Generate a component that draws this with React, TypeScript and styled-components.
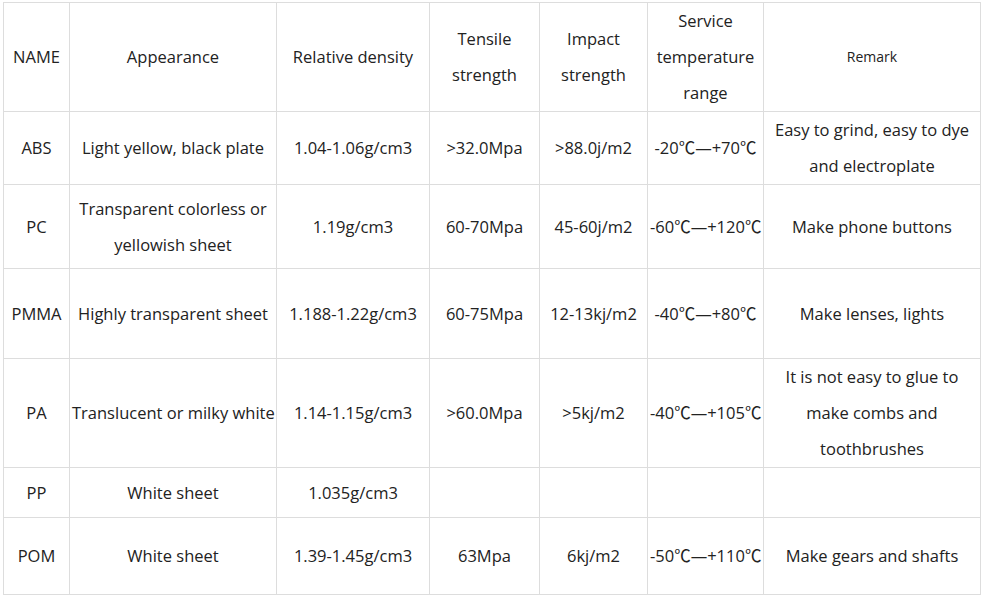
import React from "react";
import styled, { createGlobalStyle } from "styled-components";

const GlobalStyle = createGlobalStyle`
  html, body {
    margin: 0;
    padding: 0;
    background: #ffffff;
  }
`;

type Row = {
  height: number;
  cells: React.ReactNode[];
};

const widths = [66, 207, 153, 110, 108, 116, 217];

const rows: Row[] = [
  {
    height: 72,
    cells: [
      "ABS",
      "Light yellow, black plate",
      "1.04-1.06g/cm3",
      ">32.0Mpa",
      ">88.0j/m2",
      "-20℃—+70℃",
      <>
        Easy to grind, easy to dye
        <br />
        and electroplate
      </>,
    ],
  },
  {
    height: 84,
    cells: [
      "PC",
      <>
        Transparent colorless or
        <br />
        yellowish sheet
      </>,
      "1.19g/cm3",
      "60-70Mpa",
      "45-60j/m2",
      "-60℃—+120℃",
      "Make phone buttons",
    ],
  },
  {
    height: 90,
    cells: [
      "PMMA",
      "Highly transparent sheet",
      "1.188-1.22g/cm3",
      "60-75Mpa",
      "12-13kj/m2",
      "-40℃—+80℃",
      "Make lenses, lights",
    ],
  },
  {
    height: 109,
    cells: [
      "PA",
      "Translucent or milky white",
      "1.14-1.15g/cm3",
      ">60.0Mpa",
      ">5kj/m2",
      "-40℃—+105℃",
      <>
        It is not easy to glue to
        <br />
        make combs and
        <br />
        toothbrushes
      </>,
    ],
  },
  {
    height: 50,
    cells: ["PP", "White sheet", "1.035g/cm3", "", "", "", ""],
  },
  {
    height: 77,
    cells: [
      "POM",
      "White sheet",
      "1.39-1.45g/cm3",
      "63Mpa",
      "6kj/m2",
      "-50℃—+110℃",
      "Make gears and shafts",
    ],
  },
];

const App = () => {
  return (
    <Page>
      <GlobalStyle />
      <Table>
        <colgroup>
          {widths.map((w, i) => (
            <col key={i} style={{ width: w }} />
          ))}
        </colgroup>
        <thead>
          <Line $h={108}>
            <Head>NAME</Head>
            <Head>Appearance</Head>
            <Head>Relative density</Head>
            <Head>
              Tensile
              <br />
              strength
            </Head>
            <Head>
              Impact
              <br />
              strength
            </Head>
            <Head>
              Service
              <br />
              temperature
              <br />
              range
            </Head>
            <Head $small>Remark</Head>
          </Line>
        </thead>
        <tbody>
          {rows.map((row, r) => (
            <Line key={r} $h={row.height}>
              {row.cells.map((c, i) => (
                <Cell key={i}>{c}</Cell>
              ))}
            </Line>
          ))}
        </tbody>
      </Table>
    </Page>
  );
};

export default App;

const Page = styled.div`
  padding: 2px 0 0 3px;
  font-family: "Open Sans", "Noto Sans CJK SC", sans-serif;
  color: #222222;
`;

const Table = styled.table`
  border-collapse: collapse;
  table-layout: fixed;
  width: 978px;
`;

const Line = styled.tr<{ $h: number }>`
  height: ${(p) => p.$h}px;
`;

const Cell = styled.td`
  border: 1px solid #dddddd;
  padding: 0 2px;
  text-align: center;
  vertical-align: middle;
  font-size: 16.5px;
  line-height: 36px;
  white-space: nowrap;
`;

const Head = styled(Cell).attrs({ as: "th" })<{ $small?: boolean }>`
  font-weight: normal;
  font-size: ${(p) => (p.$small ? 14 : 16.5)}px;
`;
